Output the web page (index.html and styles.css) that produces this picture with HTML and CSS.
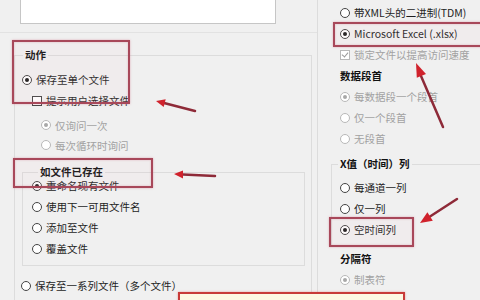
FILE: index.html
```html
<!DOCTYPE html>
<html lang="zh-CN">
<head>
<meta charset="utf-8">
<link rel="stylesheet" href="styles.css">
</head>
<body>
<div class="page">
  <div class="col-left">
    <div class="textbox"></div>
    <div class="sep"></div>
    <div class="group g-action">
      <div class="gtitle t-action">动作</div>
      <div class="row r-single"><span class="radio on"></span>保存至单个文件</div>
      <div class="row r-prompt"><span class="check"></span>提示用户选择文件</div>
      <div class="row r-ask dis"><span class="radio on"></span>仅询问一次</div>
      <div class="row r-loop dis"><span class="radio"></span>每次循环时询问</div>
      <div class="group g-exists">
        <div class="gtitle t-exists">如文件已存在</div>
        <div class="row r-first"><span class="radio on"></span>重命名现有文件</div>
        <div class="row"><span class="radio"></span>使用下一可用文件名</div>
        <div class="row"><span class="radio"></span>添加至文件</div>
        <div class="row"><span class="radio"></span>覆盖文件</div>
      </div>
      <div class="row r-series"><span class="radio"></span>保存至一系列文件（多个文件）</div>
    </div>
  </div>
  <div class="col-right">
    <div class="row"><span class="radio"></span>带XML头的二进制(TDM)</div>
    <div class="row"><span class="radio on"></span>Microsoft Excel (.xlsx)</div>
    <div class="row dis"><span class="check checked"></span>锁定文件以提高访问速度</div>
    <div class="row head">数据段首</div>
    <div class="row dis"><span class="radio on"></span>每数据段一个段首</div>
    <div class="row dis"><span class="radio"></span>仅一个段首</div>
    <div class="row dis"><span class="radio"></span>无段首</div>
    <div class="group g-x">
      <div class="gtitle t-x">X值（时间）列</div>
      <div class="row r-xfirst"><span class="radio"></span>每通道一列</div>
      <div class="row"><span class="radio"></span>仅一列</div>
      <div class="row"><span class="radio on"></span>空时间列</div>
    </div>
    <div class="row head h-sep">分隔符</div>
    <div class="row dis r-tab"><span class="radio on"></span>制表符</div>
  </div>

  <div class="annot">
    <div class="rbox b1"></div>
    <div class="rbox b2"></div>
    <div class="rbox b3"></div>
    <div class="rbox b4"></div>
    <div class="ybox"></div>
    <svg class="arrows" width="480" height="300" viewBox="0 0 480 300">
      <g class="shaft">
        <line x1="195" y1="111" x2="164" y2="103"/>
        <line x1="215" y1="176" x2="183" y2="174.5"/>
        <line x1="443" y1="127" x2="421" y2="76"/>
        <line x1="457" y1="199" x2="430" y2="216.5"/>
      </g>
      <g class="head">
        <polygon points="156,101 165.7,99.3 163.7,107.1"/>
        <polygon points="174,174 183,170.4 183,178.4"/>
        <polygon points="416,63 426,74 416.8,77.8"/>
        <polygon points="420,223 432.8,220.7 427.4,212.3"/>
      </g>
    </svg>
  </div>
</div>
</body>
</html>
```
FILE: styles.css
```css
html, body {
  margin: 0;
  padding: 0;
  background: #f0f0f0;
}
body {
  font-family: "Noto Sans CJK SC", "Noto Sans", sans-serif;
  font-size: 10.5px;
  color: #1e1e1e;
}
.page {
  position: relative;
  width: 480px;
  height: 300px;
  overflow: hidden;
  display: flex;
  background: #f0f0f0;
}
.col-left {
  width: 317px;
  flex: none;
  border-right: 1px solid #dcdcdc;
}
.col-right {
  flex: 1;
  padding: 2px 0 0 22px;
  overflow: hidden;
}
.textbox {
  margin-left: 20px;
  width: 256px;
  height: 24px;
  box-sizing: border-box;
  border: 1px solid #c6c6c6;
  border-top: none;
  background: #fff;
}
.sep {
  margin-top: 8px;
  border-top: 1px solid #e2e2e2;
}
.group {
  border: 1px solid #dcdcdc;
}
.gtitle {
  width: fit-content;
  line-height: 14px;
  height: 14px;
  margin-top: -8px;
  padding: 0 2px;
  background: #f0f0f0;
  font-weight: bold;
  color: #111;
}
.row {
  display: flex;
  align-items: center;
  height: 21px;
  white-space: nowrap;
}
.row.head {
  font-weight: bold;
  color: #111;
}
.dis {
  color: #a2a2a2;
}
.radio {
  position: relative;
  flex: none;
  width: 10px;
  height: 10px;
  box-sizing: border-box;
  border: 1px solid #444;
  border-radius: 50%;
  background: #fff;
  margin-right: 4px;
}
.radio.on::after {
  content: "";
  position: absolute;
  left: 2px;
  top: 2px;
  width: 4px;
  height: 4px;
  border-radius: 50%;
  background: #1a1a1a;
}
.dis .radio {
  border-color: #b8b8b8;
}
.dis .radio.on::after {
  background: #a8a8a8;
}
.check {
  position: relative;
  flex: none;
  width: 10px;
  height: 10px;
  box-sizing: border-box;
  border: 1px solid #444;
  background: #fff;
  margin-right: 4px;
}
.dis .check {
  border-color: #b8b8b8;
}
.check.checked::after {
  content: "";
  position: absolute;
  left: 2px;
  top: 0px;
  width: 3px;
  height: 5px;
  border-right: 1.5px solid #999;
  border-bottom: 1.5px solid #999;
  transform: rotate(40deg);
}

/* left column groups */
.g-action {
  margin: 22px 5px 0 14px;
  border-bottom: none;
  height: 260px;
}
.t-action { margin-left: 8px; }
.r-single { margin: 7px 0 0 7px; }
.r-prompt { margin-left: 17px; }
.r-ask { margin: 4px 0 0 26px; height: 20px; }
.r-loop { margin-left: 26px; height: 20px; }
.g-exists {
  margin: 17px 6px 0 7px;
  padding: 0 0 6px 9px;
}
.t-exists { margin-left: 6px; }
.r-first { margin-top: -4px; }
.r-series { margin: 9px 0 0 6px; }

/* right column */
.g-x {
  margin: 15px -40px 0 -9px;
  border-right: none;
  border-bottom: none;
  padding: 0 0 6px 8px;
}
.t-x { margin-left: -2px; }
.r-xfirst { margin-top: 6px; }
.h-sep { margin-top: 2px; height: 20px; }
.r-tab { margin-top: 1px; }

/* annotations */
.annot {
  position: absolute;
  left: 0;
  top: 0;
  width: 480px;
  height: 300px;
  pointer-events: none;
}
.rbox {
  position: absolute;
  box-sizing: border-box;
  border: 2px solid #a8485a;
  background: rgba(240, 190, 200, 0.08);
  box-shadow: 0 0 2px rgba(210, 120, 140, 0.6), inset 0 0 2px rgba(210, 120, 140, 0.5);
}
.b1 { left: 12px; top: 40px; width: 118px; height: 64px; }
.b2 { left: 13px; top: 158px; width: 140px; height: 30px; }
.b3 { left: 333px; top: 22px; width: 152px; height: 25px; }
.b4 { left: 329px; top: 217px; width: 85px; height: 30px; }
.ybox {
  position: absolute;
  box-sizing: border-box;
  left: 178px;
  top: 292px;
  width: 227px;
  height: 14px;
  border: 2px solid #c83a38;
  background: #fdf7e2;
  box-shadow: 0 0 2px rgba(220, 100, 100, 0.6);
}
.arrows {
  position: absolute;
  left: 0;
  top: 0;
}
.shaft line {
  stroke: #8e2a38;
  stroke-width: 2.5;
  stroke-linecap: round;
}
.head polygon {
  fill: #d0222c;
}
```
